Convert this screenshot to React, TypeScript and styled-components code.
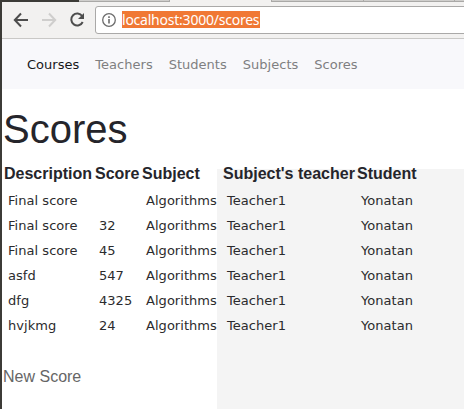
import React from "react";
import styled, { createGlobalStyle } from "styled-components";

const GlobalStyle = createGlobalStyle`
  * { box-sizing: border-box; }
  body { margin: 0; overflow: hidden; background: #fff; }
`;

const BrowserWindow = styled.div`
  width: 464px;
  height: 409px;
  overflow: hidden;
  border-left: 2px solid #3c3b37;
  display: flex;
  flex-direction: column;
  color: #25252b;
  font-family: "DejaVu Sans", Verdana, sans-serif;
`;

const TabStrip = styled.div`
  display: flex;
  height: 2px;
  flex: none;
  background: #3c3b37;
  padding-left: 77px;
`;

const Tab = styled.div<{ $width: number; $active?: boolean }>`
  width: ${(p) => p.$width}px;
  flex: none;
  background: ${(p) => (p.$active ? "#f2f1f0" : "#cfcecc")};
  border-bottom: ${(p) => (p.$active ? "none" : "1px solid #a9a8a6")};
  border-right: 1px solid #aaa9a7;
`;

const Toolbar = styled.div`
  display: flex;
  align-items: center;
  height: 37px;
  flex: none;
  background: #f2f1f0;
  border-bottom: 1px solid #c9c8c6;
  padding-left: 10px;
`;

const ToolIcon = styled.svg`
  width: 18px;
  height: 18px;
  flex: none;
  display: block;
  margin-right: 10px;
`;

const AddressBar = styled.div`
  display: flex;
  align-items: center;
  flex: none;
  width: 400px;
  height: 28px;
  margin-left: -1px;
  border: 1px solid #aaa9a8;
  border-radius: 3px;
  background: #fff;
  padding-left: 5px;
`;

const InfoIcon = styled.svg`
  width: 16px;
  height: 16px;
  flex: none;
  margin-right: 5px;
`;

const SelectedUrl = styled.span`
  height: 17px;
  width: 138px;
  margin-bottom: 1px;
  background: #f07834;
  color: #fff;
  font: 14px/17px "Noto Sans", sans-serif;
  letter-spacing: -0.23px;
  white-space: nowrap;
`;

const Navigation = styled.nav`
  display: flex;
  flex: none;
  height: 50px;
  gap: 16px;
  padding: 2px 25px 0;
  align-items: center;
  background: #f8f8fb;
`;

const NavLink = styled.a<{ $active?: boolean }>`
  font-size: 13px;
  line-height: 20px;
  letter-spacing: 0.02px;
  color: ${(p) => (p.$active ? "#17171a" : "#7f7f81")};
`;

const Page = styled.main`
  flex: 1;
  padding: 16px 0 0 1px;
  background: linear-gradient(#f4f4f4, #f4f4f4) 215px 80px no-repeat #fff;
`;

const Title = styled.h1`
  margin: 0 0 9px;
  font: 400 40px/48px "Liberation Sans", Arial, sans-serif;
`;

const ScoreTable = styled.table`
  border-collapse: collapse;
  table-layout: fixed;
  width: 426px;
  margin-left: 1px;
`;

const Column = styled.col<{ $width: number }>`
  width: ${(p) => p.$width}px;
`;

const HeaderCell = styled.th`
  height: 26px;
  padding: 0 0 3px;
  text-align: left;
  white-space: nowrap;
  font: 700 16px/23px "Liberation Sans", Arial, sans-serif;
`;

const Cell = styled.td`
  height: 25px;
  padding: 0 0 0 4px;
  white-space: nowrap;
  font-size: 13px;
  line-height: 20px;
  letter-spacing: 0.04px;
  color: #2b2b2d;
`;

const NewScore = styled.a`
  display: block;
  margin-top: 27px;
  font: 16px/24px "Liberation Sans", Arial, sans-serif;
  color: #666;
`;

const links = ["Courses", "Teachers", "Students", "Subjects", "Scores"];
const columns = [
  { label: "Description", width: 91 },
  { label: "Score", width: 47 },
  { label: "Subject", width: 81 },
  { label: "Subject's teacher", width: 134 },
  { label: "Student", width: 73 },
];
const scores = [
  ["Final score", ""],
  ["Final score", "32"],
  ["Final score", "45"],
  ["asfd", "547"],
  ["dfg", "4325"],
  ["hvjkmg", "24"],
];

export default function App() {
  return (
    <>
      <GlobalStyle />
      <BrowserWindow>
        <TabStrip>
          <Tab $width={91} />
          <Tab $width={102} $active />
          <Tab $width={92} />
          <Tab $width={91} />
          <Tab $width={91} />
        </TabStrip>
        <Toolbar>
          <ToolIcon viewBox="0 0 18 18" fill="none" stroke="#4d4d4d" strokeWidth="2">
            <path d="M16 9H3M9 2.5 2.8 9 9 15.5" />
          </ToolIcon>
          <ToolIcon viewBox="0 0 18 18" fill="none" stroke="#cfcecd" strokeWidth="2">
            <path d="M2 9h13M9 2.5 15.2 9 9 15.5" />
          </ToolIcon>
          <ToolIcon viewBox="0 0 18 18" fill="none" stroke="#4d4d4d" strokeWidth="2">
            <path d="M14.2 5A6 6 0 1 0 14.7 11" />
            <path d="M16 2v6h-6z" fill="#4d4d4d" stroke="none" />
          </ToolIcon>
          <AddressBar>
            <InfoIcon viewBox="0 0 16 16" fill="none" stroke="#6c6c6c">
              <circle cx="8" cy="8" r="6.3" strokeWidth="1.3" />
              <path d="M8 7v4.5M8 4.3v1.6" strokeWidth="1.6" />
            </InfoIcon>
            <SelectedUrl>localhost:3000/scores</SelectedUrl>
          </AddressBar>
        </Toolbar>
        <Navigation>
          {links.map((link, i) => (
            <NavLink key={link} $active={i === 0}>{link}</NavLink>
          ))}
        </Navigation>
        <Page>
          <Title>Scores</Title>
          <ScoreTable>
            <colgroup>
              {columns.map((c) => <Column key={c.label} $width={c.width} />)}
            </colgroup>
            <thead>
              <tr>{columns.map((c) => <HeaderCell key={c.label}>{c.label}</HeaderCell>)}</tr>
            </thead>
            <tbody>
              {scores.map(([description, score], i) => (
                <tr key={i}>
                  <Cell>{description}</Cell>
                  <Cell>{score}</Cell>
                  <Cell>Algorithms</Cell>
                  <Cell>Teacher1</Cell>
                  <Cell>Yonatan</Cell>
                </tr>
              ))}
            </tbody>
          </ScoreTable>
          <NewScore>New Score</NewScore>
        </Page>
      </BrowserWindow>
    </>
  );
}
